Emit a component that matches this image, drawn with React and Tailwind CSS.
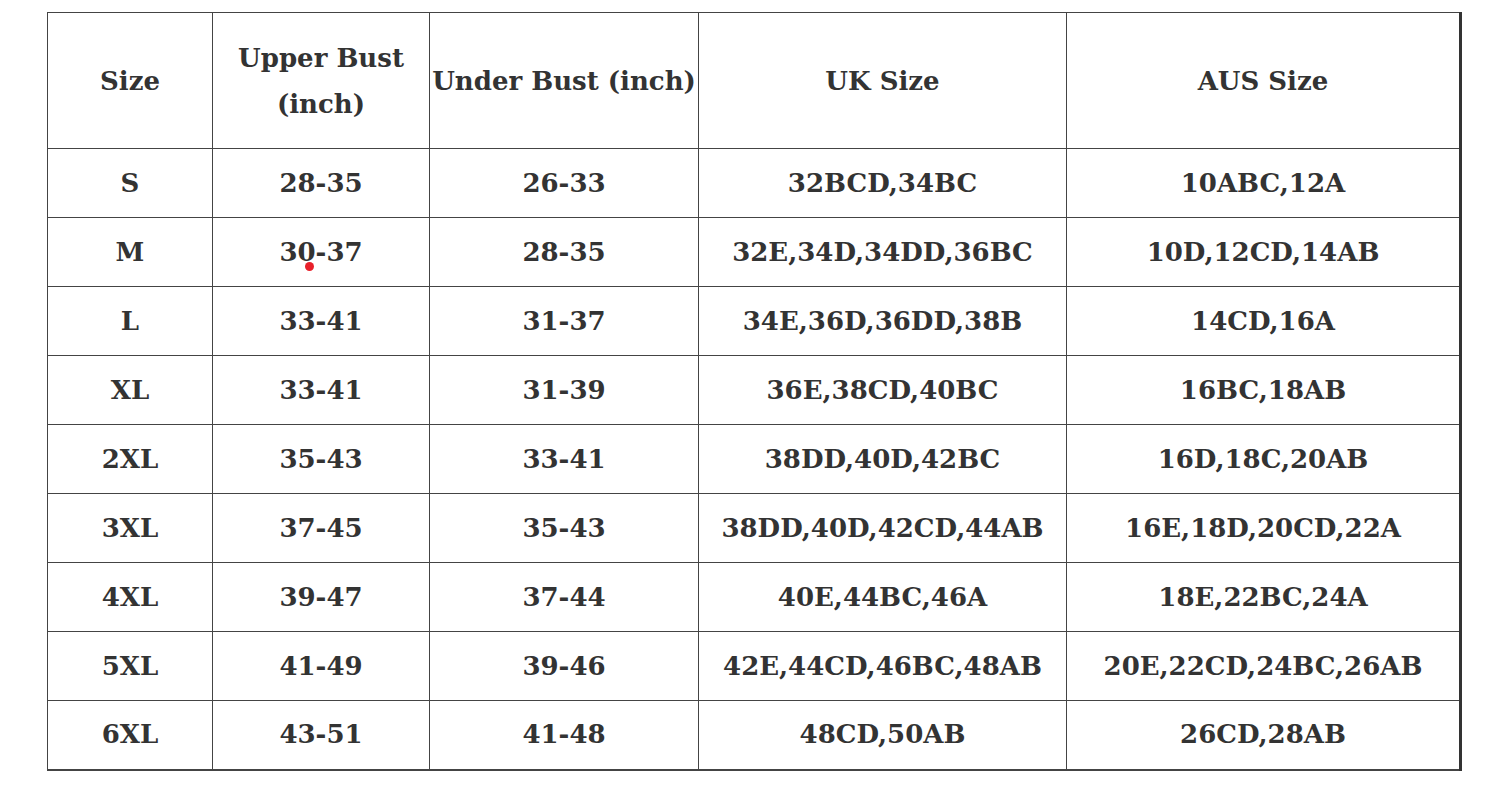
import React from "react";

const rows = [
  ["S", "28-35", "26-33", "32BCD,34BC", "10ABC,12A"],
  ["M", "30-37", "28-35", "32E,34D,34DD,36BC", "10D,12CD,14AB"],
  ["L", "33-41", "31-37", "34E,36D,36DD,38B", "14CD,16A"],
  ["XL", "33-41", "31-39", "36E,38CD,40BC", "16BC,18AB"],
  ["2XL", "35-43", "33-41", "38DD,40D,42BC", "16D,18C,20AB"],
  ["3XL", "37-45", "35-43", "38DD,40D,42CD,44AB", "16E,18D,20CD,22A"],
  ["4XL", "39-47", "37-44", "40E,44BC,46A", "18E,22BC,24A"],
  ["5XL", "41-49", "39-46", "42E,44CD,46BC,48AB", "20E,22CD,24BC,26AB"],
  ["6XL", "43-51", "41-48", "48CD,50AB", "26CD,28AB"],
];

const widths = ["w-[165px]", "w-[217px]", "w-[269px]", "w-[368px]", "w-[394px]"];

export default function App() {
  return (
    <div className="w-[1510px] h-[805px] bg-white pt-[12px] pl-[47px]" style={{ fontFamily: '"DejaVu Serif", serif' }}>
      <div className="relative w-[1414px]">
        <table className="border-collapse table-fixed w-[1414px] text-[#333] font-bold text-[26px] border-r-[3px] border-r-[#333] border-b-2 border-b-[#444]">
          <colgroup>
            {widths.map((w, i) => (
              <col key={i} className={w} />
            ))}
          </colgroup>
          <thead>
            <tr className="h-[136px]">
              <th className="border border-[#444] font-bold text-center align-middle leading-[46px] px-1">Size</th>
              <th className="border border-[#444] font-bold text-center align-middle leading-[46px] px-1">Upper Bust<br />(inch)</th>
              <th className="border border-[#444] font-bold text-center align-middle leading-[46px] px-0 whitespace-nowrap">Under Bust (inch)</th>
              <th className="border border-[#444] font-bold text-center align-middle leading-[46px] px-1">UK Size</th>
              <th className="border border-[#444] font-bold text-center align-middle leading-[46px] px-1">AUS Size</th>
            </tr>
          </thead>
          <tbody>
            {rows.map((r, i) => (
              <tr key={i} className="h-[69px]">
                {r.map((c, j) => (
                  <td key={j} className="border border-[#444] text-center align-middle whitespace-nowrap px-0">
                    {c}
                  </td>
                ))}
              </tr>
            ))}
          </tbody>
        </table>
        <div className="absolute left-[258px] top-[250px] w-[9px] h-[9px] rounded-full bg-[#e8202a]" />
      </div>
    </div>
  );
}
